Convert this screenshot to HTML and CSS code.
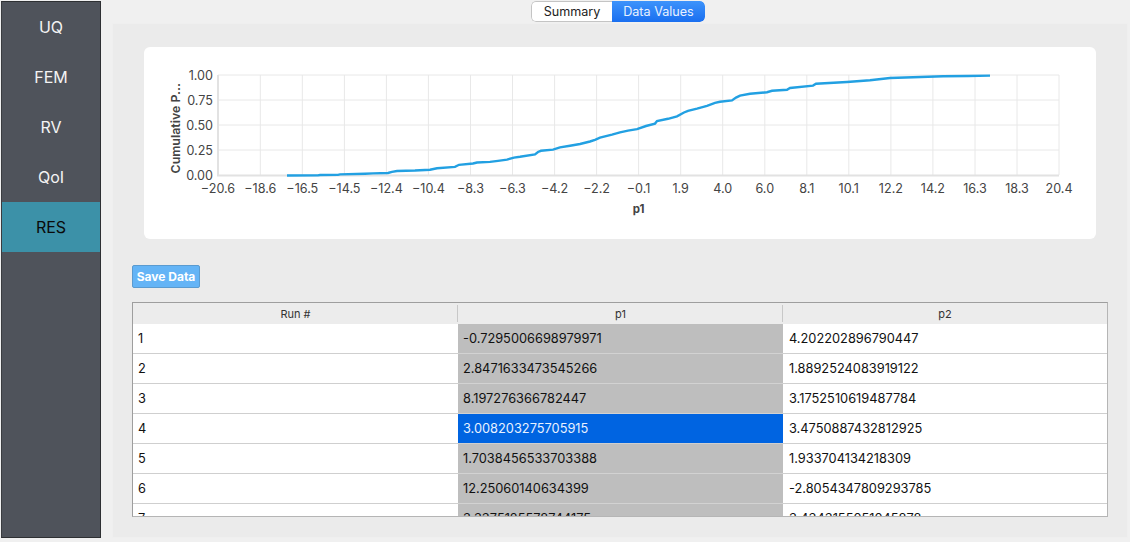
FILE: index.html
```html
<!DOCTYPE html>
<html lang="en">
<head>
<meta charset="utf-8">
<title>Results</title>
<link rel="stylesheet" href="styles.css">
</head>
<body>
<nav class="sidebar">
  <div class="nav-item">UQ</div>
  <div class="nav-item">FEM</div>
  <div class="nav-item">RV</div>
  <div class="nav-item">QoI</div>
  <div class="nav-item active">RES</div>
</nav>
<main class="main">
  <div class="tabs">
    <div class="tab">Summary</div>
    <div class="tab selected">Data Values</div>
  </div>
  <section class="panel">
    <div class="card">
      <svg class="chart" width="952" height="192" viewBox="144 47 952 192">
        <g class="grid">
          <path d="M260.3 75V175M302.3 75V175M344.4 75V175M386.4 75V175M428.4 75V175M470.5 75V175M512.5 75V175M554.6 75V175M596.6 75V175M638.6 75V175M680.7 75V175M722.7 75V175M764.8 75V175M806.8 75V175M848.8 75V175M890.9 75V175M932.9 75V175M975 75V175M1017 75V175M1059 75V175"/>
          <path d="M218 75H1059M218 100H1059M218 125H1059M218 150H1059"/>
        </g>
        <path class="axis" d="M218 75V175.5M217 175.5H1059"/>
        <polyline class="curve" points="287,175.5 318,175.4 320,175 338,174.9 340,174.4 365,173.7 373,173.4 388,173 392,171.9 397,171 415,170.5 430,169.7 437,168.3 455,166.9 459,164.8 473,163.5 477,162.5 490,161.9 498,160.9 507,159.6 514,157.6 520,156.8 535,154.4 538,152 541,150.8 553,149.6 560,147.4 570,145.8 580,144 590,141.5 595,139.8 600,137.6 612,134.6 620,132.3 628,130.6 637,129.2 646,126 655,123.6 657,121 668,118.8 677,116.4 684,112.5 688,110.8 697,108.6 707,105.8 715,102.8 720,101.8 732,100.4 736,97.6 740,95.6 750,93.8 767,92.2 772,90.8 787,89.8 790,88 813,85.6 816,83.8 847,82 870,80.2 890,78 913,77.3 943,76.2 968,76 990,75.6"/>
        <g class="ticks-y">
          <text x="213" y="79.5">1.00</text>
          <text x="213" y="104.5">0.75</text>
          <text x="213" y="129.5">0.50</text>
          <text x="213" y="154.5">0.25</text>
          <text x="213" y="180">0.00</text>
        </g>
        <g class="ticks-x">
          <text x="218" y="193">−20.6</text>
          <text x="260.3" y="193">−18.6</text>
          <text x="302.3" y="193">−16.5</text>
          <text x="344.4" y="193">−14.5</text>
          <text x="386.4" y="193">−12.4</text>
          <text x="428.4" y="193">−10.4</text>
          <text x="470.5" y="193">−8.3</text>
          <text x="512.5" y="193">−6.3</text>
          <text x="554.6" y="193">−4.2</text>
          <text x="596.6" y="193">−2.2</text>
          <text x="638.6" y="193">−0.1</text>
          <text x="680.7" y="193">1.9</text>
          <text x="722.7" y="193">4.0</text>
          <text x="764.8" y="193">6.0</text>
          <text x="806.8" y="193">8.1</text>
          <text x="848.8" y="193">10.1</text>
          <text x="890.9" y="193">12.2</text>
          <text x="932.9" y="193">14.2</text>
          <text x="975" y="193">16.3</text>
          <text x="1017" y="193">18.3</text>
          <text x="1059" y="193">20.4</text>
        </g>
        <text class="axis-title" x="638.6" y="213" text-anchor="middle">p1</text>
        <text class="axis-title y-title" transform="translate(179.5 173.5) rotate(-90)">Cumulative P...</text>
      </svg>
    </div>
    <button class="save" type="button">Save Data</button>
    <div class="table-wrap">
      <table class="data">
        <thead>
          <tr><th class="col-a">Run #</th><th class="col-a">p1</th><th class="col-b">p2</th></tr>
        </thead>
        <tbody>
          <tr><td>1</td><td class="sel">-0.7295006698979971</td><td>4.202202896790447</td></tr>
          <tr><td>2</td><td class="sel">2.8471633473545266</td><td>1.8892524083919122</td></tr>
          <tr><td>3</td><td class="sel">8.197276366782447</td><td>3.1752510619487784</td></tr>
          <tr><td>4</td><td class="current">3.008203275705915</td><td>3.4750887432812925</td></tr>
          <tr><td>5</td><td class="sel">1.7038456533703388</td><td>1.933704134218309</td></tr>
          <tr><td>6</td><td class="sel">12.25060140634399</td><td>-2.8054347809293785</td></tr>
          <tr><td>7</td><td class="sel">3.3375125578744175</td><td>3.4343155051045878</td></tr>
        </tbody>
      </table>
    </div>
  </section>
</main>
</body>
</html>
```
FILE: styles.css
```css
* { box-sizing: border-box; }
html, body { margin: 0; height: 100%; }
body {
  display: flex;
  width: 1130px;
  height: 542px;
  overflow: hidden;
  background: #f0f0f0;
  font-family: Inter, "Liberation Sans", sans-serif;
  color: #111;
}
.sidebar {
  flex: none;
  width: 100px;
  height: 537px;
  margin: 1px 0 0 1px;
  background: #4f535b;
  border: 1px solid #2e3033;
  border-left-color: #3a3c40;
}
.nav-item {
  height: 50px;
  display: flex;
  align-items: center;
  justify-content: center;
  font-size: 16px;
  color: #f4f4f4;
}
.nav-item.active { background: #3c91a8; color: #0a0a0a; }
.main {
  flex: none;
  width: 1016px;
  margin-left: 11px;
  display: flex;
  flex-direction: column;
}
.tabs {
  align-self: center;
  display: flex;
  height: 21px;
  margin-top: 1px;
  margin-left: -4px;
  border-radius: 5px;
  font-size: 12.6px;
  overflow: hidden;
}
.tab {
  display: flex;
  align-items: center;
  justify-content: center;
  width: 81px;
  background: #fff;
  color: #222;
  border: 1px solid #c4c4c4;
  border-right: 0;
  border-radius: 5px 0 0 5px;
}
.tab.selected {
  width: 93px;
  border: 0;
  border-radius: 0 5px 5px 0;
  color: #e8f1ff;
  background: linear-gradient(#3d93fb, #1a6ff0);
}
.panel {
  width: 1016px;
  height: 515px;
  margin-top: 1px;
  padding: 23px 0 0 19px;
  background: #ebebeb;
  border: 1px solid #efefef;
}
.card {
  width: 952px;
  height: 192px;
  margin-left: 12px;
  background: #fff;
  border-radius: 6px;
}
.chart { display: block; }
.grid path { fill: none; stroke: #e8e8e8; stroke-width: 1; }
.axis { fill: none; stroke: #e2e2e2; stroke-width: 2; }
.curve {
  fill: none;
  stroke: #22a0e2;
  stroke-width: 2.4;
  stroke-linejoin: miter;
}
.chart text { font-family: Inter, "Liberation Sans", sans-serif; font-size: 12.6px; fill: #444; }
.ticks-y text { text-anchor: end; }
.ticks-x text { text-anchor: middle; }
.chart .axis-title { font-weight: 700; font-size: 11.5px; fill: #444; }
.chart .y-title { font-weight: 600; font-size: 12.4px; }
.save {
  display: block;
  width: 68px;
  height: 23px;
  margin-top: 26px;
  padding: 0;
  border: 1px solid #5a9bd0;
  border-radius: 2px;
  background: #64b4f6;
  color: #fff;
  font-family: Inter, "Liberation Sans", sans-serif;
  font-size: 12px;
  font-weight: 700;
}
.table-wrap {
  width: 976px;
  height: 215px;
  margin-top: 14px;
  overflow: hidden;
  background: #fff;
  border: 1px solid #9e9e9e;
  border-bottom-color: #b5b5b5;
  border-right-color: #b5b5b5;
}
.data {
  width: 974px;
  table-layout: fixed;
  border-collapse: separate;
  border-spacing: 0;
  font-size: 12.8px;
}
.col-a { width: 325px; }
.col-b { width: 324px; }
.data th {
  height: 21px;
  padding: 0;
  background: #ececec;
  font-size: 11px;
  font-weight: 400;
  color: #333;
  position: relative;
}
.data th + th::before {
  content: "";
  position: absolute;
  left: -1px;
  top: 2px;
  bottom: 2px;
  width: 1px;
  background: #c8c8c8;
}
.data td {
  height: 30px;
  padding: 0 0 1px 5px;
  border-bottom: 1px solid #cfcfcf;
  color: #111;
}
.data td + td { padding-left: 6px; }
.data td.sel, .data td.current { padding-left: 5px; }
.data td.sel { background: #bebebe; border-bottom-color: #d2d2d2; }
.data td.current { background: #0064e1; color: #e8f1ff; }
```
